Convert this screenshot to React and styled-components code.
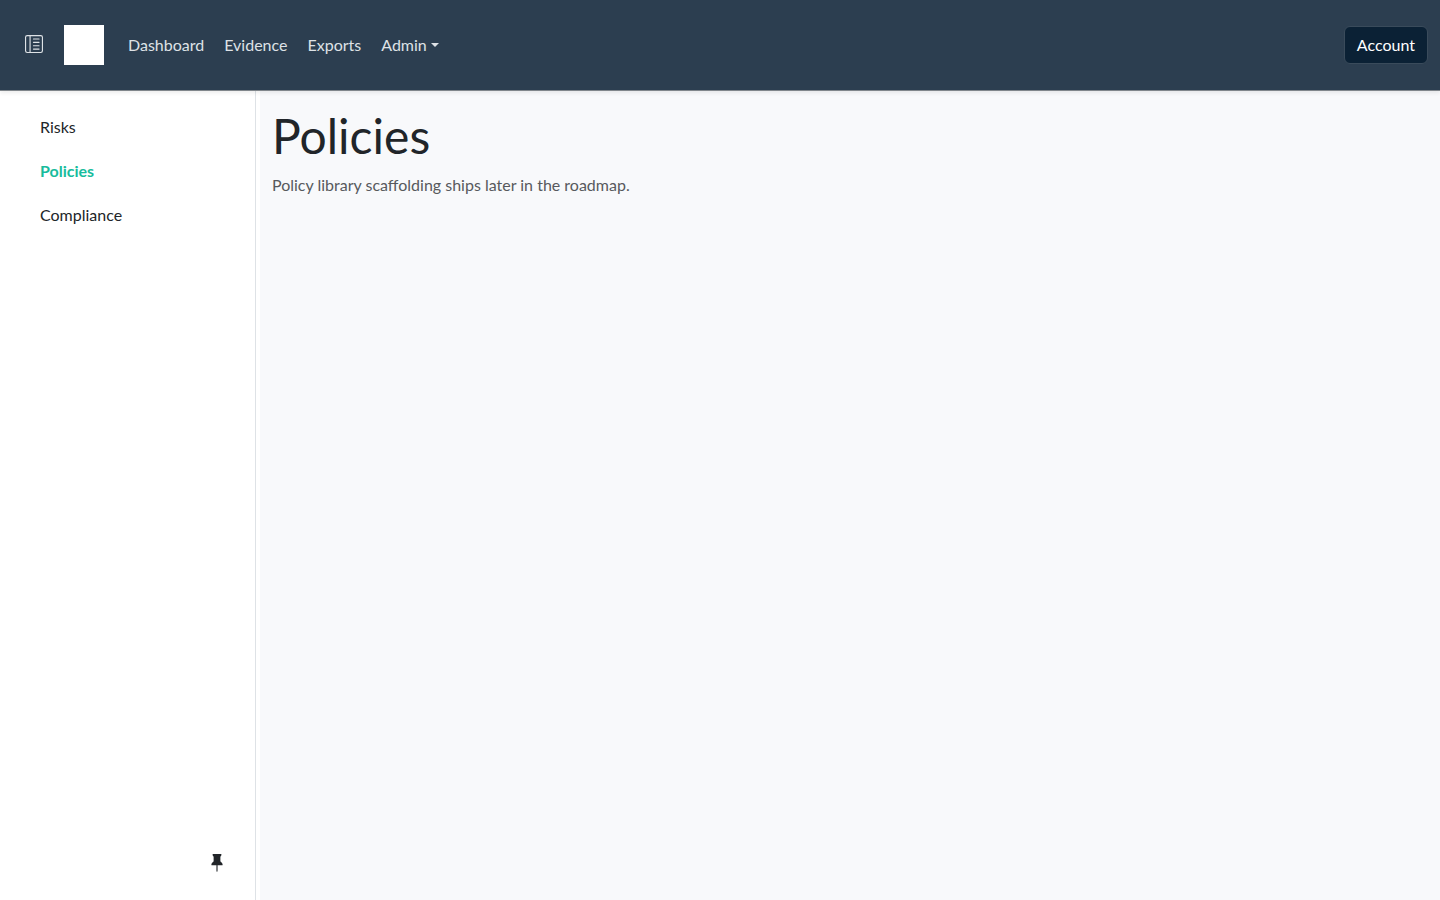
import React from "react";
import styled, { createGlobalStyle } from "styled-components";
import { BsLayoutTextSidebarReverse, BsPinFill } from "react-icons/bs";

const GlobalStyle = createGlobalStyle`
  *, *::before, *::after { box-sizing: border-box; }
  body {
    margin: 0;
    background: #ffffff;
    color: #212529;
    font: 400 16px/24px Lato, "Liberation Sans", sans-serif;
    text-rendering: optimizeLegibility;
  }
`;

const Page = styled.div`
  display: flex;
  flex-direction: column;
  min-height: 100vh;
`;

const Navbar = styled.header`
  position: relative;
  z-index: 1;
  display: flex;
  align-items: center;
  padding: 25px 12px;
  background: #2c3e50;
  border-bottom: 1px solid #80868b;
  box-shadow: 0 2px 4px rgba(0, 0, 0, 0.075);
`;

const IconButton = styled.button`
  display: flex;
  align-items: center;
  justify-content: center;
  padding: 0;
  border: 0;
  background: none;
  color: inherit;
  cursor: pointer;
`;

const MenuToggle = styled(IconButton)`
  width: 44px;
  height: 38px;
  padding-bottom: 2px;
  color: #dee2e6;
`;

const Brand = styled.a`
  display: block;
  width: 40px;
  height: 40px;
  margin: 0 14px 0 8px;
  background: #ffffff;
`;

const NavLinks = styled.nav`
  display: flex;
  flex: 1;
`;

const NavLink = styled.a`
  padding: 8px 10px;
  color: #dee2e6;
  text-decoration: none;
`;

const NavMenu = styled.button`
  display: flex;
  align-items: center;
  gap: 4px;
  padding: 8px 10px;
  border: 0;
  background: none;
  color: #dee2e6;
  font: inherit;
  cursor: pointer;

  &::after {
    content: "";
    border: solid transparent;
    border-width: 4px 4px 0;
    border-top-color: currentColor;
  }
`;

const AccountButton = styled.button`
  padding: 6px 12px;
  border: 1px solid #3a4b5b;
  border-radius: 6px;
  background: #0b2135;
  color: #ffffff;
  font: inherit;
  cursor: pointer;
`;

const Body = styled.div`
  display: flex;
  flex: 1;
  gap: 4px;
`;

const Sidebar = styled.aside`
  display: flex;
  flex-direction: column;
  justify-content: space-between;
  flex: 0 0 256px;
  padding: 16px 24px;
  border-right: 1px solid #dee2e6;
`;

const SideNav = styled.nav`
  display: flex;
  flex-direction: column;
  gap: 4px;
`;

const SideLink = styled.a`
  padding: 8px 16px;
  color: ${({ $active }) => ($active ? "#18bc9c" : "#212529")};
  font-weight: ${({ $active }) => ($active ? 700 : 400)};
  text-decoration: none;
`;

const PinButton = styled(IconButton)`
  align-self: flex-end;
  width: 28px;
  height: 42px;
`;

const Main = styled.main`
  flex: 1;
  padding: 16px 12px;
  background: #f8f9fb;
`;

const Title = styled.h1`
  margin: 0 0 8px;
  font-size: 48px;
  line-height: 58px;
  font-weight: 400;
`;

const Lead = styled.p`
  margin: 0;
  color: #57595d;
`;

export default function App() {
  return (
    <Page>
      <GlobalStyle />
      <Navbar>
        <MenuToggle type="button" aria-label="Toggle sidebar">
          <BsLayoutTextSidebarReverse size={18} />
        </MenuToggle>
        <Brand href="#" aria-label="Home" />
        <NavLinks>
          <NavLink href="#">Dashboard</NavLink>
          <NavLink href="#">Evidence</NavLink>
          <NavLink href="#">Exports</NavLink>
          <NavMenu type="button" aria-haspopup="menu">Admin</NavMenu>
        </NavLinks>
        <AccountButton type="button">Account</AccountButton>
      </Navbar>
      <Body>
        <Sidebar>
          <SideNav>
            <SideLink href="#">Risks</SideLink>
            <SideLink href="#" $active aria-current="page">Policies</SideLink>
            <SideLink href="#">Compliance</SideLink>
          </SideNav>
          <PinButton type="button" aria-label="Pin sidebar">
            <BsPinFill size={18} />
          </PinButton>
        </Sidebar>
        <Main>
          <Title>Policies</Title>
          <Lead>Policy library scaffolding ships later in the roadmap.</Lead>
        </Main>
      </Body>
    </Page>
  );
}
